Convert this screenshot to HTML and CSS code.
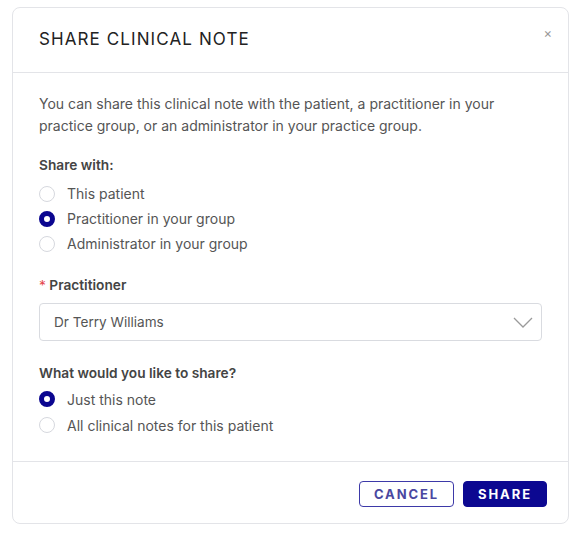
FILE: index.html
```html
<!DOCTYPE html>
<html>
<head>
<meta charset="utf-8">
<link rel="stylesheet" href="styles.css">
</head>
<body>
<div class="page">
  <div class="modal">
    <div class="modal-header">
      <h2 class="title">SHARE CLINICAL NOTE</h2>
      <span class="close">×</span>
    </div>
    <div class="modal-body">
      <p class="intro">You can share this clinical note with the patient, a practitioner in your practice group, or an administrator in your practice group.</p>
      <div class="label">Share with:</div>
      <ul class="radios first">
        <li class="radio"><span class="dot"></span>This patient</li>
        <li class="radio"><span class="dot on"></span>Practitioner in your group</li>
        <li class="radio"><span class="dot"></span>Administrator in your group</li>
      </ul>
      <div class="label req"><span class="star">*</span> Practitioner</div>
      <div class="select">
        <span>Dr Terry Williams</span>
        <svg class="chev" width="20" height="11" viewBox="0 0 20 11"><path d="M1 1 L10 10 L19 1" fill="none" stroke="#9a9a9a" stroke-width="1.3"/></svg>
      </div>
      <div class="label q">What would you like to share?</div>
      <ul class="radios second">
        <li class="radio"><span class="dot on"></span>Just this note</li>
        <li class="radio"><span class="dot"></span>All clinical notes for this patient</li>
      </ul>
    </div>
    <div class="modal-footer">
      <button class="btn cancel">CANCEL</button>
      <button class="btn share">SHARE</button>
    </div>
  </div>
</div>
</body>
</html>
```

FILE: styles.css
```css
html, body {
  margin: 0;
  padding: 0;
  background: #fff;
}
body {
  font-family: Inter, "Noto Sans", sans-serif;
  color: #555;
}
.page {
  padding: 7px 7px 0 12px;
}
.modal {
  width: 557px;
  border: 1px solid #e3e4e8;
  border-radius: 8px;
  box-sizing: border-box;
  background: #fff;
}
.modal-header {
  height: 65px;
  border-bottom: 1px solid #e3e4e8;
  display: flex;
  align-items: center;
  justify-content: space-between;
  padding: 0 16px 0 26px;
  box-sizing: border-box;
}
.title {
  margin: 0;
  font-size: 17px;
  font-weight: 400;
  color: #222;
  letter-spacing: 1.1px;
  position: relative;
  top: -1px;
}
.close {
  font-size: 13px;
  color: #999;
  position: relative;
  top: -7px;
}
.modal-body {
  padding: 20px 26px 23px 26px;
  border-bottom: 1px solid #e3e4e8;
}
.intro {
  margin: 0;
  font-size: 14px;
  line-height: 22px;
  color: #555;
}
.label {
  font-size: 13.7px;
  font-weight: 600;
  line-height: 20px;
  color: #444;
}
.intro + .label {
  margin-top: 18px;
}
.radios {
  list-style: none;
  margin: 0;
  padding: 0;
}
.radios.first {
  margin-top: 6px;
}
.radios.second {
  margin-top: 3px;
}
.radios.second .radio {
  height: 26px;
}
.radio {
  display: flex;
  align-items: center;
  height: 25px;
  font-size: 14px;
  color: #555;
}
.dot {
  width: 16px;
  height: 16px;
  border: 1px solid #d6d8de;
  border-radius: 50%;
  box-sizing: border-box;
  margin-right: 12px;
  background: #fff;
}
.dot.on {
  border: 5px solid #0b0690;
}
.label.req {
  margin-top: 19px;
}
.star {
  color: #e5484d;
  font-weight: 400;
}
.select {
  margin-top: 8px;
  height: 38px;
  border: 1px solid #d9dbe0;
  border-radius: 4px;
  box-sizing: border-box;
  display: flex;
  align-items: center;
  justify-content: space-between;
  padding: 0 8px 0 14px;
  font-size: 13.6px;
  color: #555;
}
.chev {
  display: block;
}
.label.q {
  margin-top: 22px;
}
.modal-footer {
  display: flex;
  justify-content: flex-end;
  gap: 9px;
  padding: 19px 21px 16px 0;
}
.btn {
  height: 26px;
  border-radius: 4px;
  font-family: Inter, "Noto Sans", sans-serif;
  font-size: 13px;
  font-weight: 700;
  letter-spacing: 1.9px;
  box-sizing: border-box;
  cursor: pointer;
  padding: 0;
}
.cancel {
  width: 95px;
  background: #fff;
  border: 1px solid #3d39a8;
  color: #4a47a0;
}
.share {
  width: 84px;
  background: #0c0891;
  border: 1px solid #0c0891;
  color: #fff;
}
```
